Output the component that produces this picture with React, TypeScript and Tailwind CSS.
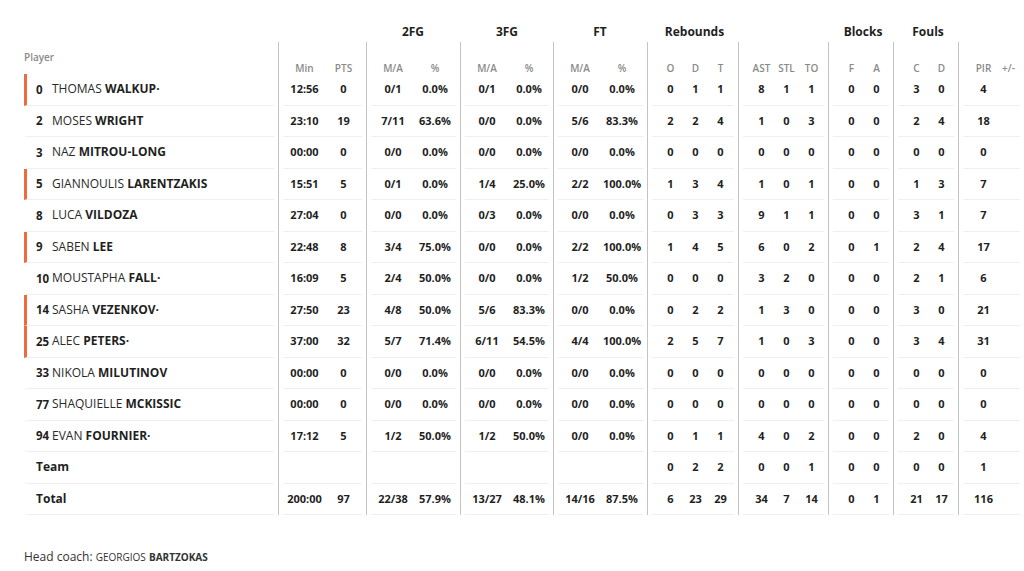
import React from "react";

type Group = { title: string; pl: number; width: number; cols: { h: string; w: number }[] };

const groups: Group[] = [
  { title: "", pl: 6, width: 88, cols: [{ h: "Min", w: 39 }, { h: "PTS", w: 39 }] },
  { title: "2FG", pl: 5, width: 94, cols: [{ h: "M/A", w: 42 }, { h: "%", w: 42 }] },
  { title: "3FG", pl: 5, width: 93, cols: [{ h: "M/A", w: 42 }, { h: "%", w: 42 }] },
  { title: "FT", pl: 5, width: 94, cols: [{ h: "M/A", w: 42 }, { h: "%", w: 42 }] },
  { title: "Rebounds", pl: 10, width: 91, cols: [{ h: "O", w: 25 }, { h: "D", w: 25 }, { h: "T", w: 25 }] },
  { title: "", pl: 10, width: 90, cols: [{ h: "AST", w: 25 }, { h: "STL", w: 25 }, { h: "TO", w: 25 }] },
  { title: "Blocks", pl: 10, width: 65, cols: [{ h: "F", w: 25 }, { h: "A", w: 25 }] },
  { title: "Fouls", pl: 10, width: 65, cols: [{ h: "C", w: 25 }, { h: "D", w: 25 }] },
  { title: "", pl: 12, width: 66, cols: [{ h: "PIR", w: 25 }, { h: "+/-", w: 25 }] },
];

type Row = { no?: string; first?: string; last: string; dot?: boolean; starter?: boolean; stats: string[] };

const z = ["00:00", "0", "0/0", "0.0%", "0/0", "0.0%", "0/0", "0.0%", "0", "0", "0", "0", "0", "0", "0", "0", "0", "0", "0", ""];

const rows: Row[] = [
  { no: "0", first: "THOMAS", last: "WALKUP", dot: true, starter: true, stats: ["12:56", "0", "0/1", "0.0%", "0/1", "0.0%", "0/0", "0.0%", "0", "1", "1", "8", "1", "1", "0", "0", "3", "0", "4", ""] },
  { no: "2", first: "MOSES", last: "WRIGHT", stats: ["23:10", "19", "7/11", "63.6%", "0/0", "0.0%", "5/6", "83.3%", "2", "2", "4", "1", "0", "3", "0", "0", "2", "4", "18", ""] },
  { no: "3", first: "NAZ", last: "MITROU-LONG", stats: z },
  { no: "5", first: "GIANNOULIS", last: "LARENTZAKIS", starter: true, stats: ["15:51", "5", "0/1", "0.0%", "1/4", "25.0%", "2/2", "100.0%", "1", "3", "4", "1", "0", "1", "0", "0", "1", "3", "7", ""] },
  { no: "8", first: "LUCA", last: "VILDOZA", stats: ["27:04", "0", "0/0", "0.0%", "0/3", "0.0%", "0/0", "0.0%", "0", "3", "3", "9", "1", "1", "0", "0", "3", "1", "7", ""] },
  { no: "9", first: "SABEN", last: "LEE", starter: true, stats: ["22:48", "8", "3/4", "75.0%", "0/0", "0.0%", "2/2", "100.0%", "1", "4", "5", "6", "0", "2", "0", "1", "2", "4", "17", ""] },
  { no: "10", first: "MOUSTAPHA", last: "FALL", dot: true, stats: ["16:09", "5", "2/4", "50.0%", "0/0", "0.0%", "1/2", "50.0%", "0", "0", "0", "3", "2", "0", "0", "0", "2", "1", "6", ""] },
  { no: "14", first: "SASHA", last: "VEZENKOV", dot: true, starter: true, stats: ["27:50", "23", "4/8", "50.0%", "5/6", "83.3%", "0/0", "0.0%", "0", "2", "2", "1", "3", "0", "0", "0", "3", "0", "21", ""] },
  { no: "25", first: "ALEC", last: "PETERS", dot: true, starter: true, stats: ["37:00", "32", "5/7", "71.4%", "6/11", "54.5%", "4/4", "100.0%", "2", "5", "7", "1", "0", "3", "0", "0", "3", "4", "31", ""] },
  { no: "33", first: "NIKOLA", last: "MILUTINOV", stats: z },
  { no: "77", first: "SHAQUIELLE", last: "MCKISSIC", stats: z },
  { no: "94", first: "EVAN", last: "FOURNIER", dot: true, stats: ["17:12", "5", "1/2", "50.0%", "1/2", "50.0%", "0/0", "0.0%", "0", "1", "1", "4", "0", "2", "0", "0", "2", "0", "4", ""] },
  { last: "Team", stats: ["", "", "", "", "", "", "", "", "0", "2", "2", "0", "0", "1", "0", "0", "0", "0", "1", ""] },
  { last: "Total", stats: ["200:00", "97", "22/38", "57.9%", "13/27", "48.1%", "14/16", "87.5%", "6", "23", "29", "34", "7", "14", "0", "1", "21", "17", "116", ""] },
];

function StatCells({ stats }: { stats: string[] }) {
  let i = 0;
  return (
    <>
      {groups.map((g, gi) => (
        <div key={gi} className="border-l border-[#c4c4c4] h-full shrink-0" style={{ width: g.width }}>
          <div className="h-full mx-[4px] border-b border-[#efefef] flex items-center" style={{ paddingLeft: g.pl - 4 }}>
            {g.cols.map((c, ci) => {
              const v = stats[i++];
              return (
                <div key={ci} className="text-center shrink-0" style={{ width: c.w }}>
                  {v}
                </div>
              );
            })}
          </div>
        </div>
      ))}
    </>
  );
}

export default function App() {
  return (
    <div className="w-[1024px] h-[571px] bg-white overflow-hidden pt-[22px] pl-[24px] text-[#1f1f1f]" style={{ fontFamily: '"Open Sans", sans-serif' }}>
      {/* group titles */}
      <div className="flex h-[20px] items-center text-[12px] font-bold">
        <div className="w-[254px] shrink-0" />
        {groups.map((g, gi) => (
          <div key={gi} className="shrink-0" style={{ width: g.width, paddingLeft: g.pl }}>
            <div className="text-center" style={{ width: g.cols.reduce((a, c) => a + c.w, 0) }}>
              {g.title}
            </div>
          </div>
        ))}
      </div>

      {/* column headers */}
      <div className="flex h-[32px] text-[10px] font-semibold text-[#8a8a8a]">
        <div className="w-[254px] shrink-0 pt-[8px]">Player</div>
        {groups.map((g, gi) => (
          <div key={gi} className="border-l border-[#c4c4c4] shrink-0 flex items-end pb-[1px] leading-[10px]" style={{ width: g.width, paddingLeft: g.pl }}>
            {g.cols.map((c, ci) => (
              <div key={ci} className="text-center shrink-0" style={{ width: c.w }}>
                {c.h}
              </div>
            ))}
          </div>
        ))}
      </div>

      {/* body */}
      {rows.map((r, ri) => (
        <div key={ri} className="flex h-[31.5px] text-[11px] font-bold">
          <div className="w-[254px] shrink-0 pr-[4px] h-full">
            <div
              className={
                "h-full border-b border-[#efefef] flex items-center pl-[9px] text-[12px] border-l-[3px] " +
                (r.starter ? "border-l-[#ee6b3b]" : "border-l-transparent")
              }
            >
              {r.no !== undefined ? (
                <>
                  <span className="inline-block w-[16px] text-[11.5px] font-bold">{r.no}</span>
                  <span className="font-normal text-[#2a2a2a]">{r.first}</span>
                  <span className="font-bold">&nbsp;{r.last}</span>
                  {r.dot && <span className="font-bold">·</span>}
                </>
              ) : (
                <span className="font-bold">{r.last}</span>
              )}
            </div>
          </div>
          <StatCells stats={r.stats} />
        </div>
      ))}

      <div className="mt-[33px] text-[12px] text-[#333]">
        Head coach: <span className="text-[10px]">GEORGIOS</span> <span className="text-[10px] font-bold">BARTZOKAS</span>
      </div>
    </div>
  );
}
